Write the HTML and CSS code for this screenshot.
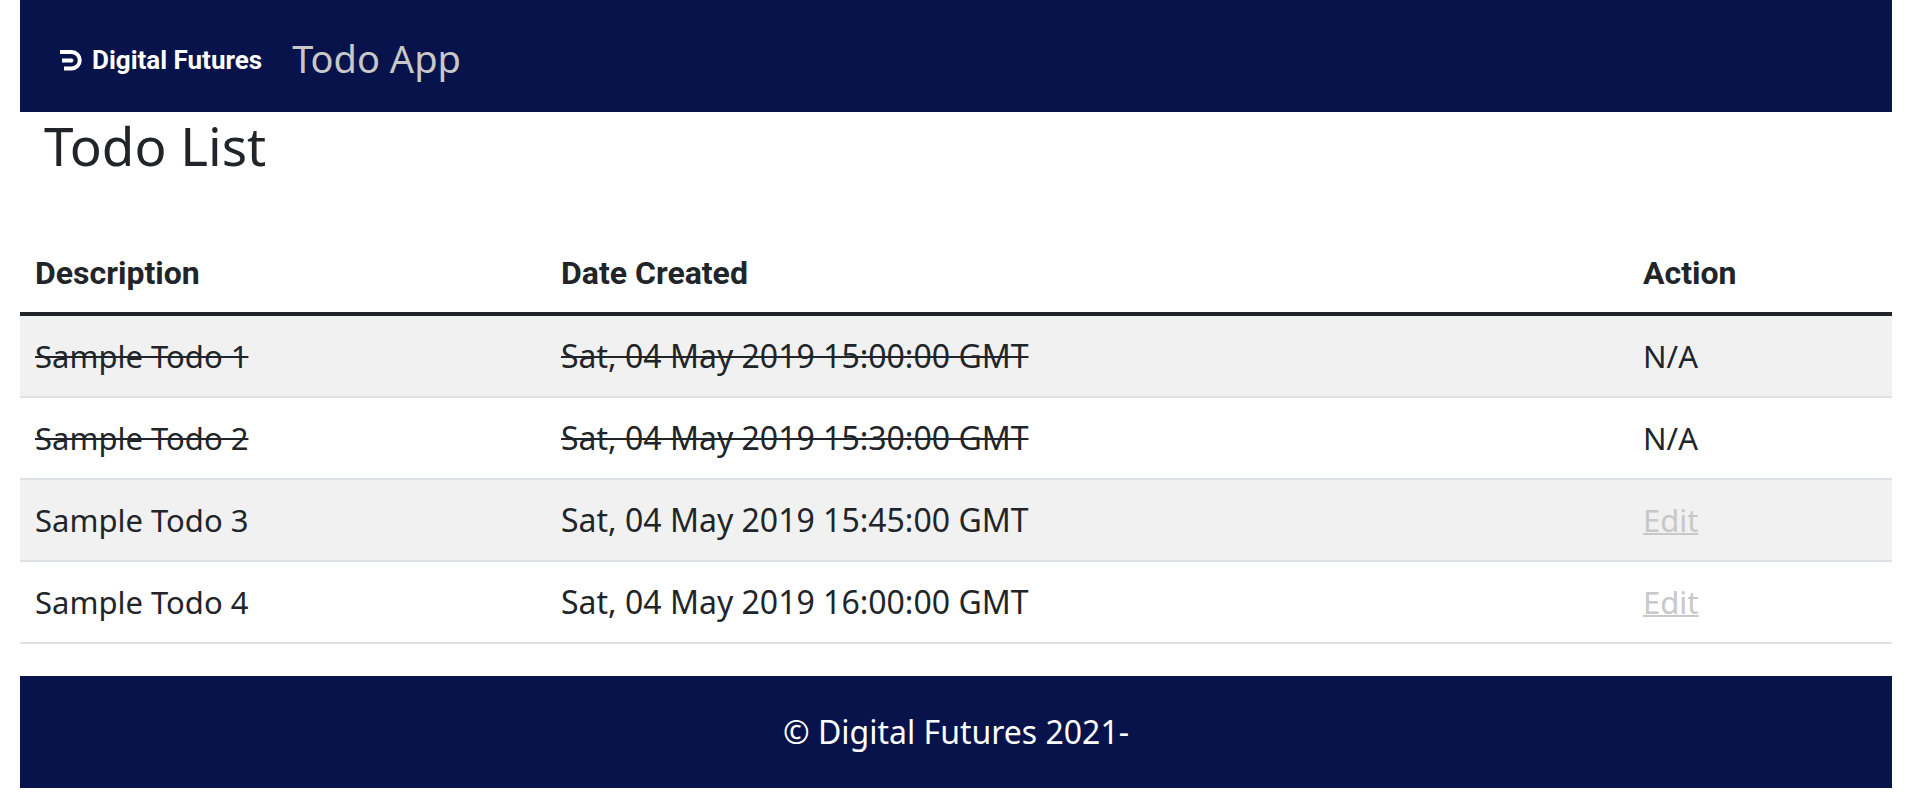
FILE: index.html
```html
<!DOCTYPE html>
<html lang="en">
<head>
<meta charset="utf-8">
<meta name="viewport" content="width=device-width, initial-scale=1">
<title>Todo App</title>
<link rel="stylesheet" href="styles.css">
</head>
<body>
<div class="page">
  <header class="bar header">
    <a class="brand" href="#">
      <svg class="brand-mark" viewBox="0 0 22 21" aria-hidden="true">
        <path d="M0 2H11.500A8.250 8.250 0 0 1 11.500 18.500H4" fill="none" stroke="#fff" stroke-width="4"/>
        <path d="M2 10.500H12" fill="none" stroke="#fff" stroke-width="4"/>
        <path d="M11.500 8.500A2 2 0 0 1 11.500 12.500Z" fill="#fff"/>
      </svg>
      <span>Digital Futures</span>
    </a>
    <a class="app-name" href="#">Todo App</a>
  </header>
  <main>
    <h1 class="title">Todo List</h1>
    <table class="todos">
      <colgroup><col class="col-description"><col class="col-date"><col class="col-action"></colgroup>
      <thead>
        <tr><th scope="col">Description</th><th scope="col">Date Created</th><th scope="col">Action</th></tr>
      </thead>
      <tbody>
        <tr><td class="done">Sample Todo 1</td><td class="date done">Sat, 04 May 2019 15:00:00 GMT</td><td>N/A</td></tr>
        <tr><td class="done">Sample Todo 2</td><td class="date done">Sat, 04 May 2019 15:30:00 GMT</td><td>N/A</td></tr>
        <tr><td>Sample Todo 3</td><td class="date">Sat, 04 May 2019 15:45:00 GMT</td><td><a class="edit" href="#">Edit</a></td></tr>
        <tr><td>Sample Todo 4</td><td class="date">Sat, 04 May 2019 16:00:00 GMT</td><td><a class="edit" href="#">Edit</a></td></tr>
      </tbody>
    </table>
  </main>
  <footer class="bar footer">© Digital Futures 2021-</footer>
</div>
</body>
</html>
```
FILE: styles.css
```css
* { box-sizing: border-box; }
body {
  margin: 0;
  background: #fff;
  color: #212529;
  font-family: "Noto Sans", sans-serif;
  font-size: 31px;
  line-height: 48px;
}
.page { padding: 0 34px 16px 20px; }
.bar {
  display: flex;
  align-items: center;
  min-height: 112px;
  background: #07134a;
  color: #fff;
}
.header { gap: 30px; padding: 8px 40px 0; }
.brand {
  display: flex;
  align-items: center;
  gap: 10px;
  color: #fff;
  font-family: Roboto, sans-serif;
  font-size: 26px;
  font-weight: 700;
  text-decoration: none;
}
.brand-mark { width: 22px; height: 21px; }
.app-name {
  color: #c8c8c8;
  font-size: 38px;
  line-height: 56px;
  padding-bottom: 4px;
  text-decoration: none;
}
.title {
  margin: 0 0 52px;
  padding: 2px 24px;
  font-size: 53px;
  font-weight: 400;
  line-height: 64px;
}
.todos {
  width: 100%;
  margin-bottom: 32px;
  border-collapse: separate;
  border-spacing: 0;
  table-layout: fixed;
}
.col-description { width: 28.1%; }
.col-action { width: 14.1%; }
th, td { padding: 16px 15px; text-align: left; }
th {
  padding: 17px 15px 15px;
  border-bottom: 4px solid #212529;
  font-family: Roboto, sans-serif;
  font-size: 32px;
  font-weight: 700;
}
td { border-bottom: 2px solid #dee2e6; }
tbody tr:nth-child(odd) td { background: #f1f1f1; }
.date { font-size: 32px; }
.done { text-decoration: line-through; text-decoration-thickness: 2px; }
.edit { color: #c8c8c8; text-decoration-thickness: 2px; }
.footer { justify-content: center; padding: 0 16px; font-size: 32px; }
```
